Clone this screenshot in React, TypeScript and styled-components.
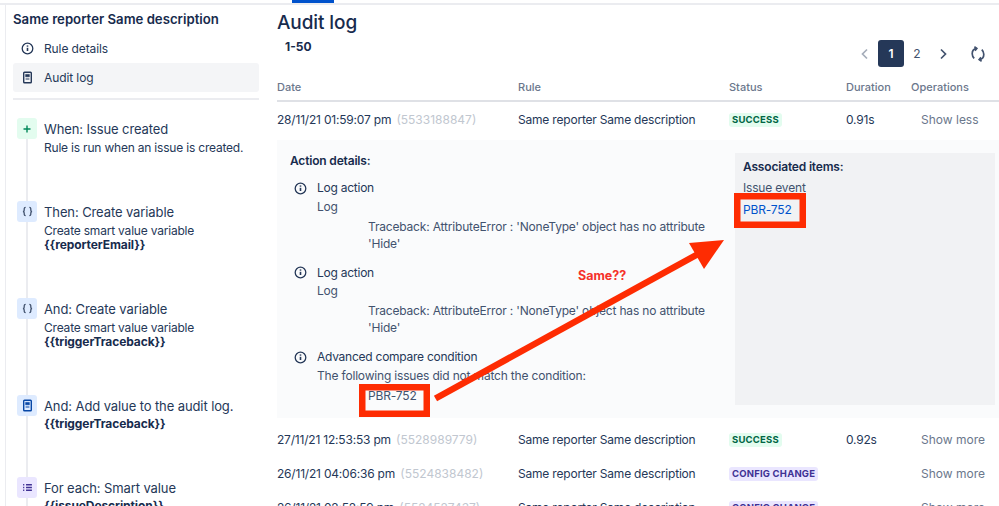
import styled, { createGlobalStyle } from 'styled-components';
import { ReactNode } from 'react';

const GlobalStyle = createGlobalStyle`
  html, body {
    margin: 0;
    height: 506px;
    overflow: hidden;
    background: #fff;
    color: #172b4d;
    font-family: Inter, "Liberation Sans", sans-serif;
    font-size: 12px;
  }
`;

const Page = styled.div`
  position: relative;
  width: 999px;
  height: 506px;
  overflow: hidden;
`;

const TopBar = styled.div`
  height: 3px;
  border-bottom: 2px solid #ebecf0;
  padding-left: 292px;
`;

const TabMark = styled.div`
  width: 42px;
  height: 3px;
  background: #0052cc;
`;

const Body = styled.div`
  display: flex;
`;

const Sidebar = styled.aside`
  flex: 0 0 272px;
  margin-left: 5px;
  border-left: 1px solid #ebecf0;
  padding: 5px 18px 0 7px;
  box-sizing: border-box;
  height: 501px;
`;

const RuleTitle = styled.h2`
  margin: 0 0 6px;
  font-size: 13.2px;
  line-height: 18px;
  font-weight: 600;
`;

const NavItem = styled.div<{ $active?: boolean }>`
  display: flex;
  align-items: center;
  gap: 10px;
  height: 29px;
  padding-left: 8px;
  border-radius: 3px;
  color: #253858;
  background: ${(p) => (p.$active ? '#f4f5f7' : 'transparent')};
  letter-spacing: -0.1px;
`;

const Divider = styled.hr`
  border: 0;
  height: 2px;
  margin: 6px 0 18px;
  background: #ebecf0;
`;

const Step = styled.div`
  display: flex;
  gap: 7px;
  padding-left: 4px;
`;

const StepRail = styled.div`
  display: flex;
  flex-direction: column;
  align-items: center;
  flex: 0 0 20px;
`;

const StepIcon = styled.div<{ $bg: string; $fg: string }>`
  flex: 0 0 21px;
  width: 20px;
  display: flex;
  align-items: center;
  justify-content: center;
  border-radius: 3px;
  background: ${(p) => p.$bg};
  color: ${(p) => p.$fg};
`;

const RailLine = styled.div`
  flex: 1;
  width: 2px;
  background: #ebecf0;
`;

const StepBody = styled.div`
  padding: 2px 0 46px;
  min-width: 0;
`;

const StepTitle = styled.div`
  font-size: 13px;
  line-height: 18px;
  margin-bottom: 2px;
  color: #253858;
  letter-spacing: -0.1px;
`;

const StepText = styled.div`
  font-size: 12px;
  line-height: 15px;
  color: #253858;
  letter-spacing: -0.2px;
`;

const StepCode = styled(StepText)`
  font-weight: 700;
  line-height: 14px;
  color: #172b4d;
  letter-spacing: -0.1px;
`;

const Main = styled.main`
  flex: 1;
  min-width: 0;
`;

const Heading = styled.h1`
  margin: 5px 0 0;
  font-size: 19px;
  line-height: 26px;
  font-weight: 500;
  color: #172b4d;
  letter-spacing: -0.1px;
`;

const PagerRow = styled.div`
  display: flex;
  justify-content: space-between;
  height: 32px;
  padding-left: 8px;
`;

const RangeLabel = styled.div`
  font-weight: 700;
  font-size: 12px;
  line-height: 16px;
  margin-top: 3px;
`;

const Pager = styled.div`
  display: flex;
  align-items: center;
  margin: 4px 13px 0 0;
  height: 27px;
  color: #42526e;
`;

const PageButton = styled.div<{ $current?: boolean; $muted?: boolean }>`
  width: 26px;
  height: 27px;
  display: flex;
  align-items: center;
  justify-content: center;
  font-size: 12px;
  border-radius: 3px;
  color: ${(p) => (p.$current ? '#fff' : p.$muted ? '#a5adba' : '#42526e')};
  background: ${(p) => (p.$current ? '#253858' : 'transparent')};
  font-weight: ${(p) => (p.$current ? 600 : 400)};
`;

const RefreshSlot = styled.div`
  margin-left: 14px;
  display: flex;
  color: #42526e;
`;

const columns = '241px 211px 117px 65px 1fr';

const HeaderRow = styled.div`
  display: grid;
  grid-template-columns: ${columns};
  height: 20px;
  border-bottom: 2px solid #dfe1e6;
  margin-top: 12px;
  font-size: 11px;
  font-weight: 500;
  line-height: 14px;
  color: #6b778c;
`;

const Row = styled.div`
  display: grid;
  grid-template-columns: ${columns};
  align-items: center;
  height: 34px;
  font-size: 12px;
  color: #253858;
  letter-spacing: -0.2px;
  white-space: nowrap;
`;

const RunId = styled.span`
  margin-left: 2px;
  color: #c1c7d0;
  letter-spacing: 0;
`;

const Lozenge = styled.span<{ $kind: 'success' | 'config' }>`
  justify-self: start;
  margin-top: 2px;
  padding: 0 3px;
  height: 14px;
  line-height: 14px;
  border-radius: 3px;
  font-size: 9.5px;
  font-weight: 700;
  letter-spacing: 0.2px;
  background: ${(p) => (p.$kind === 'success' ? '#e3fcef' : '#eae6ff')};
  color: ${(p) => (p.$kind === 'success' ? '#006644' : '#403294')};
`;

const ShowToggle = styled.span`
  color: #6b778c;
  padding-left: 10px;
  letter-spacing: 0;
`;

const Details = styled.section`
  display: grid;
  grid-template-columns: 445px 260px;
  height: 278px;
  margin: 4px 0;
  padding: 13px 0 0 13px;
  box-sizing: border-box;
  background: #fafbfc;
  letter-spacing: -0.18px;
`;

const SectionLabel = styled.div`
  font-size: 12px;
  font-weight: 600;
  line-height: 16px;
  color: #172b4d;
`;

const ActionList = styled.div`
  margin-top: 10px;
  display: flex;
  flex-direction: column;
  gap: 12px;
`;

const Action = styled.div`
  padding-left: 4px;
`;

const ActionHead = styled.div`
  display: flex;
  align-items: center;
  gap: 10px;
  line-height: 18px;
  color: #253858;
  letter-spacing: -0.25px;
`;

const ActionSub = styled.div`
  padding-left: 23px;
  margin-top: 0.5px;
  line-height: 18px;
  color: #42526e;
`;

const ActionMessage = styled.div`
  padding-left: 74px;
  margin-top: 2px;
  line-height: 17px;
  color: #42526e;
  width: 350px;
`;

const Associated = styled.div`
  height: 252px;
  box-sizing: border-box;
  padding: 6px 8px;
  background: #f1f2f4;
`;

const AssocText = styled.div`
  margin-top: 4px;
  line-height: 18px;
  color: #42526e;
`;

const IssueLink = styled.div`
  margin-top: 4px;
  line-height: 18px;
  color: #0052cc;
`;

const Overlay = styled.svg`
  position: absolute;
  inset: 0;
  pointer-events: none;
`;

const Remark = styled.span`
  position: absolute;
  left: 578px;
  top: 268px;
  color: #f5312a;
  font-size: 12.5px;
  font-weight: 700;
  line-height: 16px;
`;

const InfoIcon = () => (
  <svg width="13" height="13" viewBox="0 0 13 13" fill="none" stroke="currentColor" strokeWidth="1.3">
    <circle cx="6.5" cy="6.5" r="5.3" />
    <path d="M6.5 5.8v3.2" strokeWidth="1.6" />
    <path d="M6.5 3.4v1.3" strokeWidth="1.6" />
  </svg>
);

const DocIcon = () => (
  <svg width="13" height="13" viewBox="0 0 13 13" fill="none" stroke="currentColor" strokeWidth="1.4">
    <rect x="2.7" y="1.2" width="7.6" height="10.6" rx="0.8" />
    <path d="M4.6 3.4h3.8v2.4H4.6z" fill="currentColor" strokeWidth="0.5" />
    <path d="M4.6 8h3.8" strokeWidth="1" />
  </svg>
);

const BracesIcon = () => (
  <svg width="11" height="11" viewBox="0 0 12 12" fill="none" stroke="currentColor" strokeWidth="1.4">
    <path d="M4 1.5c-1.4 0-1.6.6-1.6 1.6v1.4C2.4 5.4 2 6 1 6c1 0 1.4.6 1.4 1.5v1.4c0 1 .2 1.6 1.6 1.6" />
    <path d="M8 1.5c1.4 0 1.6.6 1.6 1.6v1.4c0 .9.4 1.5 1.4 1.5-1 0-1.4.6-1.4 1.5v1.4c0 1-.2 1.6-1.6 1.6" />
  </svg>
);

const PlusIcon = () => (
  <svg width="10" height="10" viewBox="0 0 10 10" fill="none" stroke="currentColor" strokeWidth="1.4">
    <path d="M5 1.5v7M1.5 5h7" />
  </svg>
);

const ListIcon = () => (
  <svg width="11" height="11" viewBox="0 0 12 12" fill="none" stroke="currentColor" strokeWidth="1.5">
    <path d="M4.4 3h6.4M4.4 6h6.4M4.4 9h6.4M1.2 3h1.3M1.2 6h1.3M1.2 9h1.3" />
  </svg>
);

const Chevron = ({ left }: { left?: boolean }) => (
  <svg width="10" height="12" viewBox="0 0 10 12" fill="none" stroke="currentColor" strokeWidth="1.7">
    <path d={left ? 'M7 1.5 2.5 6 7 10.5' : 'M3 1.5 7.5 6 3 10.5'} />
  </svg>
);

const RefreshIcon = () => (
  <svg width="16" height="16" viewBox="0 0 16 16" fill="none" stroke="currentColor" strokeWidth="1.7">
    <path d="M6.6 2.4C4 2.8 2.2 5 2.2 7.8c0 1.9.8 3.4 2 4.6" />
    <path d="M4.4 0.8 6.8 2.4 5 4.6" />
    <path d="M9.4 13.6c2.6-.4 4.4-2.6 4.4-5.4 0-1.9-.8-3.4-2-4.6" />
    <path d="M11.6 15.2 9.2 13.6 11 11.4" />
  </svg>
);

interface StepProps {
  icon: ReactNode;
  bg: string;
  fg: string;
  title: string;
  children: ReactNode;
}

function RuleStep({ icon, bg, fg, title, children }: StepProps) {
  return (
    <Step>
      <StepRail>
        <StepIcon $bg={bg} $fg={fg}>
          {icon}
        </StepIcon>
        <RailLine />
      </StepRail>
      <StepBody>
        <StepTitle>{title}</StepTitle>
        {children}
      </StepBody>
    </Step>
  );
}

function ActionBlock({ title, sub, message }: { title: string; sub: string; message: ReactNode }) {
  return (
    <Action>
      <ActionHead>
        <InfoIcon />
        {title}
      </ActionHead>
      <ActionSub>{sub}</ActionSub>
      <ActionMessage>{message}</ActionMessage>
    </Action>
  );
}

const RULE = 'Same reporter Same description';
const TRACE = "Traceback: AttributeError : 'NoneType' object has no attribute 'Hide'";

function LogRow({ date, id, status, duration, more }: { date: string; id: string; status: 'success' | 'config'; duration?: string; more?: boolean }) {
  return (
    <Row>
      <span>
        {date} <RunId>({id})</RunId>
      </span>
      <span>{RULE}</span>
      <Lozenge $kind={status}>{status === 'success' ? 'SUCCESS' : 'CONFIG CHANGE'}</Lozenge>
      <span>{duration}</span>
      <ShowToggle>{more ? 'Show more' : 'Show less'}</ShowToggle>
    </Row>
  );
}

export default function App() {
  return (
    <Page>
      <GlobalStyle />
      <TopBar>
        <TabMark />
      </TopBar>
      <Body>
        <Sidebar>
          <RuleTitle>{RULE}</RuleTitle>
          <NavItem>
            <InfoIcon />
            Rule details
          </NavItem>
          <NavItem $active>
            <DocIcon />
            Audit log
          </NavItem>
          <Divider />
          <RuleStep icon={<PlusIcon />} bg="#e3fcef" fg="#00875a" title="When: Issue created">
            <StepText>Rule is run when an issue is created.</StepText>
          </RuleStep>
          <RuleStep icon={<BracesIcon />} bg="#deebff" fg="#42526e" title="Then: Create variable">
            <StepText>Create smart value variable</StepText>
            <StepCode>{'{{reporterEmail}}'}</StepCode>
          </RuleStep>
          <RuleStep icon={<BracesIcon />} bg="#deebff" fg="#42526e" title="And: Create variable">
            <StepText>Create smart value variable</StepText>
            <StepCode>{'{{triggerTraceback}}'}</StepCode>
          </RuleStep>
          <RuleStep icon={<DocIcon />} bg="#deebff" fg="#0747a6" title="And: Add value to the audit log.">
            <StepCode>{'{{triggerTraceback}}'}</StepCode>
          </RuleStep>
          <RuleStep icon={<ListIcon />} bg="#eae6ff" fg="#403294" title="For each: Smart value">
            <StepCode>{'{{issueDescription}}'}</StepCode>
          </RuleStep>
        </Sidebar>
        <Main>
          <Heading>Audit log</Heading>
          <PagerRow>
            <RangeLabel>1-50</RangeLabel>
            <Pager>
              <PageButton $muted>
                <Chevron left />
              </PageButton>
              <PageButton $current>1</PageButton>
              <PageButton>2</PageButton>
              <PageButton>
                <Chevron />
              </PageButton>
              <RefreshSlot>
                <RefreshIcon />
              </RefreshSlot>
            </Pager>
          </PagerRow>
          <HeaderRow>
            <span>Date</span>
            <span>Rule</span>
            <span>Status</span>
            <span>Duration</span>
            <span>Operations</span>
          </HeaderRow>
          <LogRow date="28/11/21 01:59:07 pm" id="5533188847" status="success" duration="0.91s" />
          <Details>
            <div>
              <SectionLabel>Action details:</SectionLabel>
              <ActionList>
                <ActionBlock title="Log action" sub="Log" message={TRACE} />
                <ActionBlock title="Log action" sub="Log" message={TRACE} />
                <ActionBlock
                  title="Advanced compare condition"
                  sub="The following issues did not match the condition:"
                  message="PBR-752"
                />
              </ActionList>
            </div>
            <Associated>
              <SectionLabel>Associated items:</SectionLabel>
              <AssocText>Issue event</AssocText>
              <IssueLink>PBR-752</IssueLink>
            </Associated>
          </Details>
          <LogRow date="27/11/21 12:53:53 pm" id="5528989779" status="success" duration="0.92s" more />
          <LogRow date="26/11/21 04:06:36 pm" id="5524838482" status="config" more />
          <LogRow date="26/11/21 02:52:59 pm" id="5524527437" status="config" more />
        </Main>
      </Body>
      <Overlay width="999" height="506" viewBox="0 0 999 506">
        <g fill="none" stroke="#fe2c02" strokeWidth="6.5">
          <rect x="737.25" y="196.25" width="65.5" height="28.5" />
          <rect x="362.25" y="387.25" width="64.5" height="26.5" />
          <path d="M435.5 398.5 700 253" />
        </g>
        <polygon points="724,240 689,243 704,269" fill="#fe2c02" />
      </Overlay>
      <Remark>Same??</Remark>
    </Page>
  );
}
